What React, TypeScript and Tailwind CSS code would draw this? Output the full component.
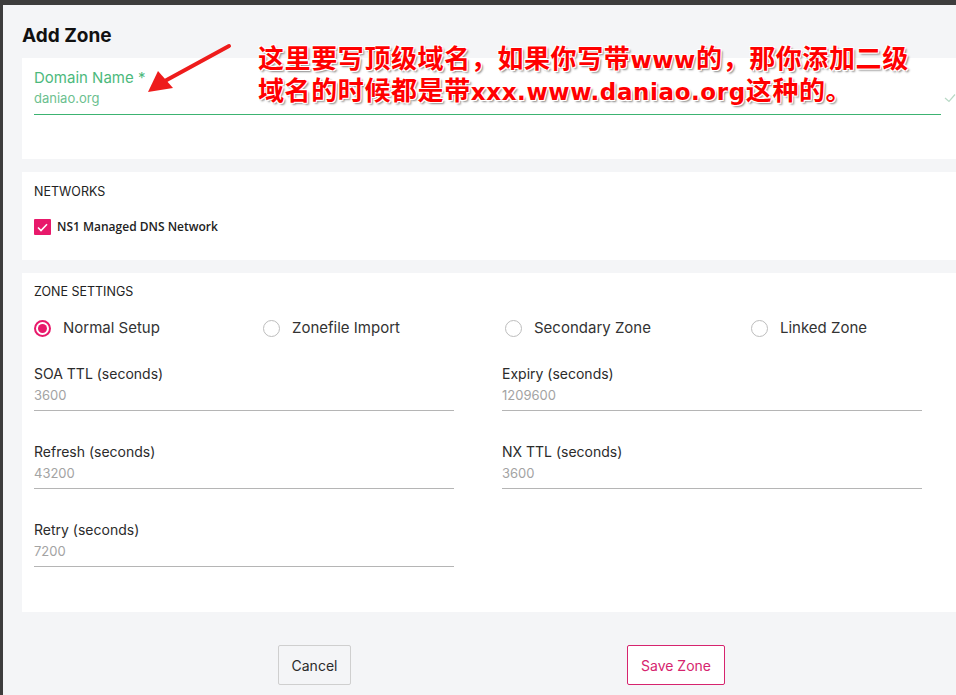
import React from 'react'

const font = "font-['Inter','Open_Sans',sans-serif]"

const Radio = ({ checked, label, width }: { checked?: boolean; label: string; width: string }) => (
    <div className={`flex items-center gap-[12px] ${width}`}>
        {checked ? (
            <span className="w-[17px] h-[17px] rounded-full border-2 border-[#e8196b] flex items-center justify-center">
                <span className="w-[9px] h-[9px] rounded-full bg-[#e8196b]"></span>
            </span>
        ) : (
            <span className="w-[17px] h-[17px] rounded-full border border-[#bdbdbd] bg-white"></span>
        )}
        <span className="text-[15px] text-[#333] leading-[18px]">{label}</span>
    </div>
)

const Field = ({ label, value }: { label: string; value: string }) => (
    <div className="w-[420px]">
        <p className="text-[14px] leading-[18px] text-[#2b2b2b]">{label}</p>
        <p className="mt-[4px] text-[13px] leading-[16px] text-[#a3a3a3] pb-[7px] border-b border-[#b5b5b5]">{value}</p>
    </div>
)

const App = () => {
    return (
        <div className={`relative w-[956px] h-[695px] overflow-hidden bg-[#3d3d3d] pt-[5px] pl-[3px] ${font}`}>
            <div className="h-full w-[1000px] bg-[#f4f5f7] pl-[19px]">
                <h2 className="pt-[19px] text-[19px] leading-[24px] font-bold text-[#111]">Add Zone</h2>

                {/* domain */}
                <div className="mt-[10px] bg-white px-[12px] pt-[12px] pb-[44px]">
                    <p className="text-[15px] leading-[16px] text-[#4cb97c]">Domain Name *</p>
                    <div className="flex items-center">
                        <div className="w-[907px] shrink-0 mt-[4px] pb-[8px] border-b border-[#3cb371]">
                            <p className="text-[13px] leading-[16px] text-[#6cbf8f]">daniao.org</p>
                        </div>
                        <svg width="12" height="10" viewBox="0 0 12 10" className="shrink-0 ml-[3px] -mt-[6px]">
                            <path d="M1 5 L5 8.5 L11 1.5" fill="none" stroke="#b9d9c6" strokeWidth="1.2" />
                        </svg>
                    </div>
                </div>

                {/* networks */}
                <div className="mt-[13px] bg-white px-[12px] pt-[13px] pb-[24px]">
                    <p className="text-[12.5px] leading-[14px] text-[#222] uppercase">Networks</p>
                    <label className="mt-[19px] flex items-center gap-[6px]">
                        <span className="w-[17px] h-[16px] bg-[#e8196b] flex items-center justify-center rounded-[1px]">
                            <svg width="11" height="9" viewBox="0 0 11 9">
                                <path d="M1 4.5 L4 7.5 L10 1.2" fill="none" stroke="#fff" strokeWidth="1.6" />
                            </svg>
                        </span>
                        <span className="text-[12px] font-semibold text-[#222] font-['Open_Sans',sans-serif]">NS1 Managed DNS Network</span>
                    </label>
                </div>

                {/* zone settings */}
                <div className="mt-[13px] bg-white px-[12px] pt-[12px] pb-[45px]">
                    <p className="text-[12.5px] leading-[14px] text-[#222] uppercase">Zone Settings</p>
                    <div className="mt-[20px] flex items-center">
                        <Radio checked label="Normal Setup" width="w-[229px]" />
                        <Radio label="Zonefile Import" width="w-[242px]" />
                        <Radio label="Secondary Zone" width="w-[246px]" />
                        <Radio label="Linked Zone" width="w-[180px]" />
                    </div>
                    <div className="mt-[28px] grid grid-cols-[420px_420px] gap-x-[48px] gap-y-[32px]">
                        <Field label="SOA TTL (seconds)" value="3600" />
                        <Field label="Expiry (seconds)" value="1209600" />
                        <Field label="Refresh (seconds)" value="43200" />
                        <Field label="NX TTL (seconds)" value="3600" />
                        <Field label="Retry (seconds)" value="7200" />
                    </div>
                </div>

                {/* footer */}
                <div className="pt-[33px] pl-[256px] flex items-center gap-[276px]">
                    <button className="w-[73px] h-[40px] border border-[#cfcfcf] rounded-[2px] bg-[#f4f5f7] text-[14px] text-[#2b2b2b]">
                        Cancel
                    </button>
                    <button className="w-[98px] h-[40px] border border-[#d6246e] rounded-[2px] bg-white text-[14px] text-[#d6246e]">
                        Save Zone
                    </button>
                </div>
            </div>

            {/* annotation */}
            <svg className="absolute left-0 top-0" width="260" height="110" viewBox="0 0 260 110">
                <line x1="229" y1="46" x2="163" y2="82" stroke="#ee1c1c" strokeWidth="4" strokeLinecap="round" />
                <polygon points="148,92 158,71 173,88" fill="#ee1c1c" />
            </svg>
            <div className="absolute left-[258px] top-[42px] text-[26px] tracking-[0.6px] text-[#f00] font-bold font-['Noto_Sans_CJK_SC',sans-serif] [text-shadow:1px_1px_0_#fff,-1px_-1px_0_#fff,1px_-1px_0_#fff,-1px_1px_0_#fff,2px_2px_2px_#888] whitespace-nowrap">
                <p className="h-[32px] leading-[30px]">这里要写顶级域名，如果你写带<span className="font-['DejaVu_Sans',sans-serif] text-[23px]">www</span>的，那你添加二级</p>
                <p className="h-[32px] leading-[30px]">域名的时候都是带<span className="font-['DejaVu_Sans',sans-serif] text-[23px]">xxx.www.daniao.org</span>这种的。</p>
            </div>
        </div>
    )
}

export default App
